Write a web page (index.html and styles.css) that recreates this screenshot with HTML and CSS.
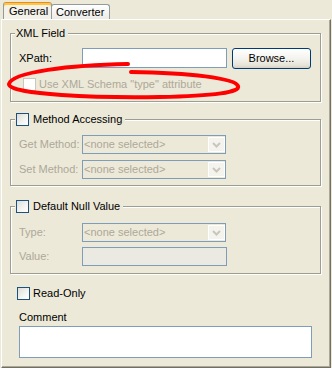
FILE: index.html
```html
<!DOCTYPE html>
<html>
<head>
<meta charset="utf-8">
<link rel="stylesheet" href="styles.css">
</head>
<body>
<div class="tabs">
  <div class="tab tab-active">General</div>
  <div class="tab tab-inactive">Converter</div>
</div>
<div class="panel">
  <div class="group group-xml">
    <div class="group-title"><span class="title-text">XML Field</span></div>
    <div class="field-row row-xpath">
      <span class="label">XPath:</span>
      <div class="textfield"></div>
      <div class="button">Browse...</div>
    </div>
    <div class="check-row check-schema">
      <span class="checkbox checkbox-disabled"></span>
      <span class="check-label label-disabled">Use XML Schema "type" attribute</span>
    </div>
  </div>

  <div class="group group-method">
    <div class="group-title">
      <span class="checkbox"></span>
      <span class="title-text">Method Accessing</span>
    </div>
    <div class="field-row row-get">
      <span class="label label-disabled">Get Method:</span>
      <div class="combo">
        <span class="combo-text">&lt;none selected&gt;</span>
        <span class="combo-arrow"><svg width="9" height="6" viewBox="0 0 9 6"><polyline points="1,1 4.5,4.5 8,1" fill="none" stroke="#C9C7BA" stroke-width="2"/></svg></span>
      </div>
    </div>
    <div class="field-row row-set">
      <span class="label label-disabled">Set Method:</span>
      <div class="combo">
        <span class="combo-text">&lt;none selected&gt;</span>
        <span class="combo-arrow"><svg width="9" height="6" viewBox="0 0 9 6"><polyline points="1,1 4.5,4.5 8,1" fill="none" stroke="#C9C7BA" stroke-width="2"/></svg></span>
      </div>
    </div>
  </div>

  <div class="group group-null">
    <div class="group-title">
      <span class="checkbox"></span>
      <span class="title-text">Default Null Value</span>
    </div>
    <div class="field-row row-type">
      <span class="label label-disabled">Type:</span>
      <div class="combo">
        <span class="combo-text">&lt;none selected&gt;</span>
        <span class="combo-arrow"><svg width="9" height="6" viewBox="0 0 9 6"><polyline points="1,1 4.5,4.5 8,1" fill="none" stroke="#C9C7BA" stroke-width="2"/></svg></span>
      </div>
    </div>
    <div class="field-row row-value">
      <span class="label label-disabled">Value:</span>
      <div class="textfield textfield-disabled"></div>
    </div>
  </div>

  <div class="check-row check-readonly">
    <span class="checkbox"></span>
    <span class="check-label">Read-Only</span>
  </div>
  <div class="comment-label">Comment</div>
  <div class="textarea"></div>
</div>

<svg class="annotation" width="332" height="368" viewBox="0 0 332 368">
  <path d="M 128 64 C 70 65, 12 72, 9 84 C 8 95, 100 98, 160 97 C 215 96, 241 92, 238 86 C 235 78, 190 73, 131 72" fill="none" stroke="#FF0000" stroke-width="4" stroke-linecap="round"/>
</svg>
</body>
</html>
```

FILE: styles.css
```css
* {
  box-sizing: border-box;
}

html, body {
  margin: 0;
  padding: 0;
}

body {
  width: 332px;
  height: 368px;
  overflow: hidden;
  position: relative;
  background: #ECE9D8;
  font-family: "Liberation Sans", Arial, sans-serif;
  font-size: 11px;
  line-height: 13px;
  color: #000;
}

/* Tabs */
.tabs {
  display: flex;
  align-items: flex-end;
  height: 19px;
  padding-left: 3px;
}

.tab {
  border: 1px solid #919B9C;
  border-bottom: none;
  border-radius: 3px 3px 0 0;
}

.tab-active {
  width: 49px;
  height: 17px;
  padding: 2px 0 0 5px;
  background: #F3F1E8;
  border-top: 1px solid #E68B2C;
  box-shadow: inset 0 2px 0 #FFC83C;
  position: relative;
  z-index: 1;
}

.tab-inactive {
  width: 59px;
  height: 15px;
  padding: 1px 0 0 4px;
  background: linear-gradient(#FFFFFF, #ECEBE6);
  margin-left: -1px;
}

/* Panel */
.panel {
  margin-left: 1px;
  width: 330px;
  height: 349px;
  border: 1px solid;
  border-color: #FFFFFF #716F64 #716F64 #FFFFFF;
  box-shadow: inset -1px -1px 0 #ACA899;
  padding: 0 9px 0 8px;
  display: flex;
  flex-direction: column;
}

/* Group boxes */
.group {
  border: 1px solid #9D9D91;
  box-shadow: inset 1px 1px 0 #FFFFFF, 1px 1px 0 #FFFFFF;
  padding: 0 8px;
  display: flex;
  flex-direction: column;
}

.group-xml {
  margin-top: 13px;
  padding-bottom: 10px;
}

.group-method {
  margin-top: 17px;
  padding-bottom: 6px;
}

.group-null {
  margin-top: 20px;
  padding-bottom: 7px;
}

.group-title {
  align-self: flex-start;
  margin: -7px 0 0 -4px;
  padding: 0 3px 0 1px;
  height: 13px;
  background: #ECE9D8;
  display: flex;
  align-items: center;
  gap: 4px;
}

/* Rows */
.field-row {
  display: flex;
  align-items: center;
}

.label {
  width: 63px;
  flex: none;
}

.label-disabled {
  color: #ACA899;
}

.row-xpath {
  margin-top: 8px;
  align-items: flex-start;
}

.row-xpath .label {
  line-height: 20px;
}

.row-get {
  margin-top: 9px;
}

.row-set {
  margin-top: 6px;
}

.row-type {
  margin-top: 10px;
}

.row-value {
  margin-top: 5px;
}

.textfield {
  width: 145px;
  height: 20px;
  background: #FFFFFF;
  border: 1px solid #7F9DB9;
}

.textfield-disabled {
  height: 19px;
  background: #EBEAE2;
}

.button {
  margin-left: 5px;
  width: 79px;
  height: 21px;
  border: 1px solid #003C74;
  border-radius: 3px;
  background: linear-gradient(#FFFFFF 0%, #F4F3EE 50%, #E6E3D8 85%, #D6D0C5 100%);
  display: flex;
  align-items: center;
  justify-content: center;
}

.combo {
  width: 144px;
  height: 19px;
  border: 1px solid #7F9DB9;
  display: flex;
  align-items: stretch;
}

.combo-text {
  flex: 1;
  color: #ACA899;
  padding-left: 1px;
  line-height: 17px;
  white-space: nowrap;
  overflow: hidden;
}

.combo-arrow {
  width: 17px;
  margin: 1px 0 1px 0;
  border: 1px solid #FFFFFF;
  background: #F4F3EE;
  display: flex;
  align-items: center;
  justify-content: center;
}

/* Checkboxes */
.check-row {
  display: flex;
  align-items: center;
  height: 13px;
}

.checkbox {
  width: 13px;
  height: 13px;
  flex: none;
  border: 1px solid #1C5180;
  background: linear-gradient(135deg, #DCDCD7 0%, #F5F5F3 60%, #FFFFFF 100%);
}

.checkbox-disabled {
  border-color: #CAC8BB;
  background: #FFFFFF;
}

.check-schema {
  margin-top: 9px;
  margin-left: 4px;
  gap: 3px;
}

.check-readonly {
  margin-top: 13px;
  margin-left: 7px;
  gap: 3px;
}

.check-label {
  white-space: nowrap;
}

.comment-label {
  margin-top: 11px;
  margin-left: 9px;
}

.textarea {
  margin-top: 2px;
  margin-left: 9px;
  width: 293px;
  height: 32px;
  background: #FFFFFF;
  border: 1px solid #7F9DB9;
}

/* Red hand-drawn annotation */
.annotation {
  position: absolute;
  left: 0;
  top: 0;
  pointer-events: none;
}
```
